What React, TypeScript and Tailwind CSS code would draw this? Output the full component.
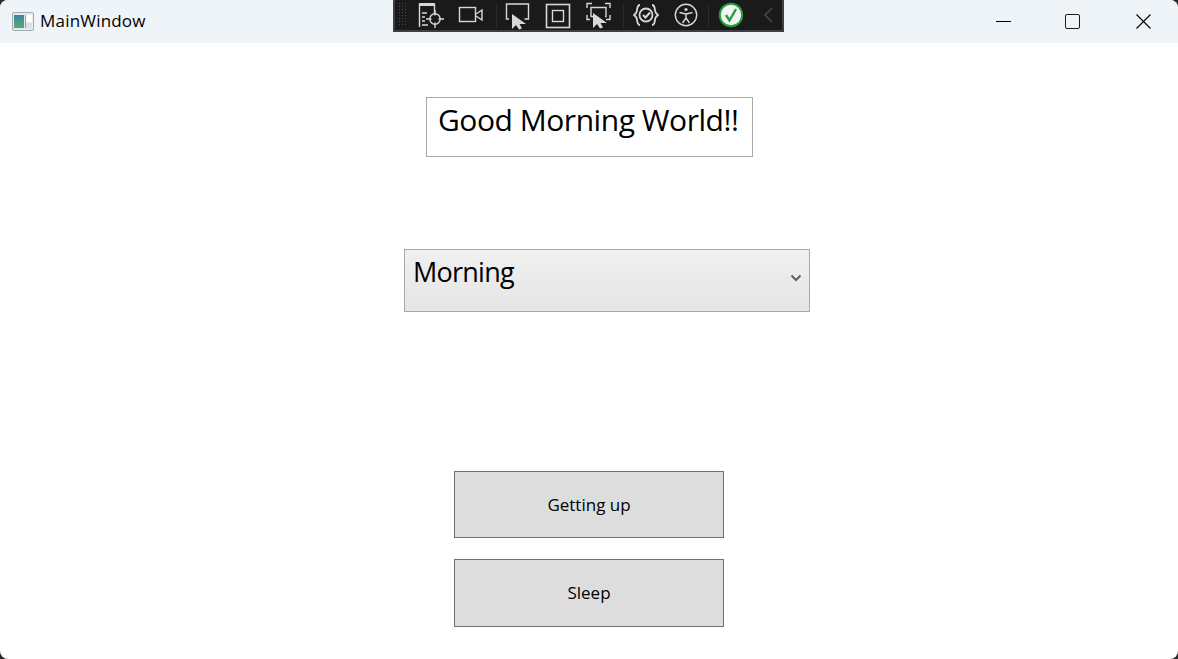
import React from 'react'

function AppIcon() {
  return (
    <svg width="22" height="19" viewBox="0 0 22 19" className="shrink-0">
      <defs>
        <linearGradient id="pane" x1="0" y1="0" x2="0" y2="1">
          <stop offset="0" stopColor="#4283a6" />
          <stop offset="1" stopColor="#54ab74" />
        </linearGradient>
      </defs>
      <rect x="0.5" y="0.5" width="21" height="18" rx="1.5" fill="#e6eaee" stroke="#a6acb3" />
      <rect x="2" y="3" width="10" height="13" fill="url(#pane)" />
      <rect x="14" y="3" width="6" height="7" fill="#ffffff" />
      <rect x="13" y="3" width="1" height="13" fill="#7fa3a8" />
      <rect x="14" y="11" width="6" height="5" fill="#dde1e4" />
    </svg>
  )
}

function ToolbarIcons() {
  const s = '#d8d8d8'
  return (
    <>
      <svg className="absolute left-[23px] top-[2px]" width="26" height="26" viewBox="0 0 26 26" fill="none" stroke={s} strokeWidth="1.4">
        <path d="M1.5 25V2h15v10" />
        <path d="M1.5 2.5h15" strokeWidth="3" />
        <path d="M4 11h5M4 15h3M4 19h3M4 23h6" />
        <circle cx="17" cy="17" r="5.2" />
        <path d="M17 8v5.5M17 20.500v5.500M8 17h5.500M20.500 17h5.500" />
      </svg>
      <svg className="absolute left-[63px] top-[6px]" width="26" height="18" viewBox="0 0 26 18" fill="none" stroke={s} strokeWidth="1.4">
        <rect x="1.5" y="1.500" width="16" height="14" />
        <path d="M18 8l6-4v10l-6-4" />
      </svg>
      <svg className="absolute left-[110px] top-[2px]" width="26" height="28" viewBox="0 0 26 28" fill="none" stroke={s} strokeWidth="1.4">
        <path d="M4 17H1.500V2h22v15h-4" />
        <path d="M7 12v15l4-4 3 4.500 3-1-2.500-4.500H21z" fill={s} stroke="none" />
      </svg>
      <svg className="absolute left-[150px] top-[3px]" width="26" height="26" viewBox="0 0 26 26" fill="none" stroke={s}>
        <rect x="1.5" y="1.5" width="23" height="23" strokeWidth="1.6" />
        <rect x="7.5" y="7.5" width="11" height="11" strokeWidth="1.4" />
      </svg>
      <svg className="absolute left-[191px] top-[2px]" width="26" height="28" viewBox="0 0 26 28" fill="none" stroke={s} strokeWidth="1.4">
        <path d="M1 6V1.500h5M19 1.500h5V6M24 13v4.500h-4M1 13v4.500h3" />
        <path d="M7 14.500H5v-9h15v9h-1" />
        <path d="M7 11v15l4-4 3 4.500 3-1-2.500-4.500H21z" fill={s} stroke="none" />
      </svg>
      <svg className="absolute left-[238px] top-[2px]" width="26" height="26" viewBox="0 0 26 26" fill="none" stroke={s} strokeWidth="1.8">
        <circle cx="13" cy="13" r="6.5" />
        <path d="M10 13l2.500 2.500L17 10.500" strokeWidth="2" />
        <path d="M7 3C3 3 5 9 3 11L1 13l2 2c2 2 0 8 4 8M19 3c4 0 2 6 4 8l2 2-2 2c-2 2 0 8-4 8" />
      </svg>
      <svg className="absolute left-[279px] top-[3px]" width="24" height="24" viewBox="0 0 24 24" fill="none" stroke={s} strokeWidth="1.4">
        <circle cx="12" cy="12" r="10.7" />
        <circle cx="12" cy="6.5" r="1.6" fill={s} stroke="none" />
        <path d="M5.500 9.500L12 11l6.500-1.500M12 11v4M12 15l-3.500 5M12 15l3.500 5" />
      </svg>
      <svg className="absolute left-[323px] top-[2px]" width="26" height="26" viewBox="0 0 26 26" fill="none">
        <circle cx="13" cy="13" r="11.200" fill="#f4f4f4" stroke="#1f9e3c" strokeWidth="2" />
        <path d="M8 13l3.500 5.500L18 7" stroke="#1f9e3c" strokeWidth="2.400" />
      </svg>
      <svg className="absolute left-[368px] top-[7px]" width="12" height="16" viewBox="0 0 12 16" fill="none" stroke="#4d4d4d" strokeWidth="1.4">
        <path d="M9 1L2 8l7 7" />
      </svg>
      <div className="absolute left-[101px] top-[5px] h-[22px] w-px bg-[#2c2c2c]" />
      <div className="absolute left-[228px] top-[5px] h-[22px] w-px bg-[#2c2c2c]" />
      <div className="absolute left-[313px] top-[5px] h-[22px] w-px bg-[#2c2c2c]" />
    </>
  )
}

export default function App() {
  return (
    <div className="h-[659px] w-[1178px] overflow-hidden bg-[#2b2b2b] font-['Open_Sans',sans-serif] text-black">
      <div className="relative flex h-full flex-col overflow-hidden rounded-[8px] bg-white">
        <div className="flex h-[43px] shrink-0 items-center bg-[#eff4f9] pb-[1px] pl-[12px]">
          <AppIcon />
          <span className="ml-[6px] pb-[1px] text-[17px] leading-none tracking-[0.2px]">MainWindow</span>
          <div className="ml-auto flex h-full">
            <button className="flex w-[65px] items-center justify-center">
              <div className="h-px w-[15px] bg-black" />
            </button>
            <button className="flex w-[73px] items-center justify-center">
              <div className="h-[15px] w-[15px] rounded-[2px] border-[1.5px] border-[#1a1a1a]" />
            </button>
            <button className="flex w-[69px] items-center justify-center">
              <svg width="15" height="15" viewBox="0 0 15 15" stroke="#000" strokeWidth="1.1">
                <path d="M0.500 0.500l14 14M14.500 0.500l-14 14" />
              </svg>
            </button>
          </div>
        </div>

        {/* inspector toolbar floats over the title bar */}
        <div className="absolute left-[393px] top-0 h-[32px] w-[391px] border-x-2 border-b-2 border-[#3c3f44] bg-[#1a1a1a]">
          <div className="absolute left-[3px] top-[2px] h-[24px] w-[9px] bg-[radial-gradient(#4a4a4a_1px,transparent_1px)] bg-[length:3px_3px]" />
          <ToolbarIcons />
        </div>

        <div className="flex flex-col pt-[54px]">
          <div className="ml-[426px] h-[60px] w-[327px] border border-[#a8a8b0] bg-white pl-[11px] text-[30px] leading-[44px] tracking-[-0.46px]">
            Good Morning World!!
          </div>
          <div className="ml-[404px] mt-[92px] flex h-[63px] w-[406px] items-start border border-[#a8a8a8] bg-gradient-to-b from-[#f0f0f0] to-[#e5e5e5] pl-[8px] pr-[7px]">
            <span className="text-[27px] leading-[44px] tracking-[-0.75px]">Morning</span>
            <svg className="ml-auto mt-[24px]" width="12" height="8" viewBox="0 0 12 8" fill="none" stroke="#606060" strokeWidth="2">
              <path d="M1.500 1.500L6 6l4.500-4.500" />
            </svg>
          </div>
          <button className="ml-[454px] mt-[159px] flex h-[67px] w-[270px] items-center justify-center border border-[#707070] bg-[#dddddd] text-[17px]">
            Getting up
          </button>
          <button className="ml-[454px] mt-[21px] flex h-[68px] w-[270px] items-center justify-center border border-[#707070] bg-[#dddddd] text-[17px]">
            Sleep
          </button>
        </div>
      </div>
    </div>
  )
}
